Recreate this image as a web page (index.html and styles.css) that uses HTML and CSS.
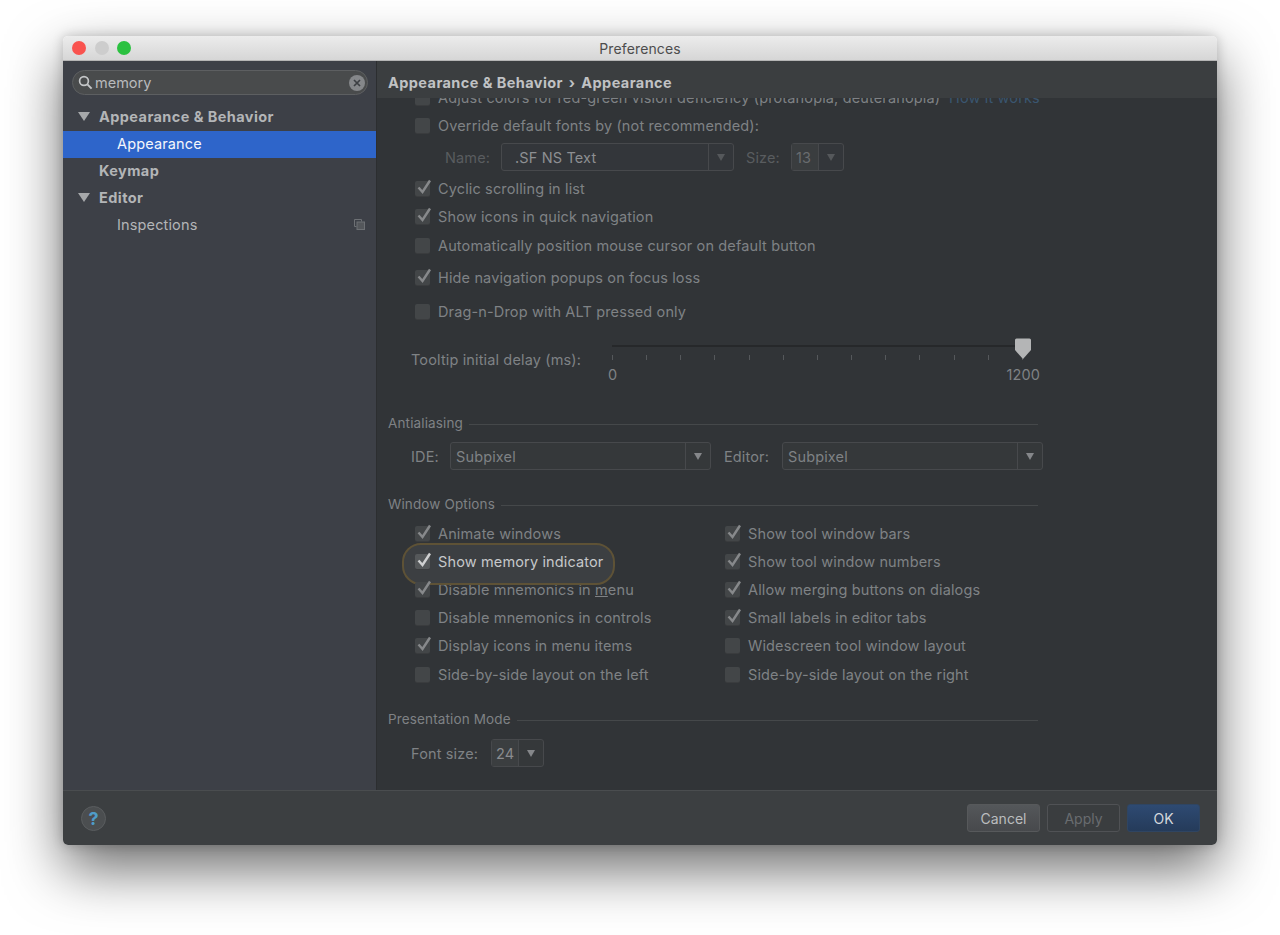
FILE: index.html
```html
<!DOCTYPE html>
<html lang="en">

<head>
    <meta charset="UTF-8">
    <title>Preferences</title>
    <link rel="stylesheet" href="styles.css">
</head>

<body>
    <svg class="defs" width="0" height="0">
        <symbol id="check" viewBox="0 0 18 18">
            <path d="M3.5 9.5 L7.5 14 L15 2.5" fill="none" stroke="currentColor" stroke-width="2.4" />
        </symbol>
    </svg>

    <div class="window">
        <div class="titlebar">
            <div class="lights">
                <span class="light red"></span>
                <span class="light grey"></span>
                <span class="light green"></span>
            </div>
            <div class="title">Preferences</div>
        </div>

        <div class="content">
            <div class="sidebar">
                <div class="search">
                    <svg class="search-icon" width="15" height="15" viewBox="0 0 15 15">
                        <circle cx="6" cy="6" r="4.4" fill="none" stroke="#c4c6c8" stroke-width="1.7" />
                        <path d="M9.4 9.4 L13.6 13.6" stroke="#c4c6c8" stroke-width="2" />
                    </svg>
                    <span class="search-text">memory</span>
                    <svg class="search-clear" width="16" height="16" viewBox="0 0 16 16">
                        <circle cx="8" cy="8" r="8" fill="#85878a" />
                        <path d="M5 5 L11 11 M11 5 L5 11" stroke="#3c3f43" stroke-width="1.7" />
                    </svg>
                </div>
                <div class="tree">
                    <div class="node top"><span class="arrow"></span>Appearance &amp; Behavior</div>
                    <div class="node sub selected">Appearance</div>
                    <div class="node top"><span class="arrow none"></span>Keymap</div>
                    <div class="node top"><span class="arrow"></span>Editor</div>
                    <div class="node sub">Inspections
                        <svg class="copy-icon" width="11" height="11" viewBox="0 0 11 11">
                            <path d="M0.5 0.5 H7.5 V2.5 M0.5 0.5 V7.5 H2.5" fill="none" stroke="#6d7074" />
                            <rect x="3" y="3" width="7.5" height="7.5" fill="#54575b" stroke="#6d7074" />
                        </svg>
                    </div>
                </div>
            </div>

            <div class="main">
                <div class="crumbs">Appearance &amp; Behavior <span class="crumb-sep">›</span> Appearance</div>
                <div class="pane">
                    <div class="row clipped">
                        <span class="box"></span>
                        <span>Adjust colors for red-green vision deficiency (protanopia, deuteranopia)</span>
                        <span class="link">How it works</span>
                    </div>
                    <div class="row">
                        <span class="box"></span>
                        <span>Override default fonts by (not recommended):</span>
                    </div>
                    <div class="font-row">
                        <span class="faint name-label">Name:</span>
                        <div class="combo name-combo faint-combo"><span class="combo-text">.SF NS Text</span><span class="combo-btn"></span></div>
                        <span class="faint size-label">Size:</span>
                        <div class="combo size-combo faint-combo"><span class="combo-text">13</span><span class="combo-btn"></span></div>
                    </div>
                    <div class="row gap3">
                        <span class="box"><svg class="tick"><use href="#check" /></svg></span>
                        <span>Cyclic scrolling in list</span>
                    </div>
                    <div class="row">
                        <span class="box"><svg class="tick"><use href="#check" /></svg></span>
                        <span>Show icons in quick navigation</span>
                    </div>
                    <div class="row gap1">
                        <span class="box"></span>
                        <span>Automatically position mouse cursor on default button</span>
                    </div>
                    <div class="row gap4">
                        <span class="box"><svg class="tick"><use href="#check" /></svg></span>
                        <span>Hide navigation popups on focus loss</span>
                    </div>
                    <div class="row gap6">
                        <span class="box"></span>
                        <span>Drag-n-Drop with ALT pressed only</span>
                    </div>

                    <div class="slider-row">
                        <span class="slider-label">Tooltip initial delay (ms):</span>
                        <div class="slider">
                            <div class="track"></div>
                            <div class="ticks">
                                <i></i><i></i><i></i><i></i><i></i><i></i><i></i><i></i><i></i><i></i><i></i><i></i><i></i>
                            </div>
                            <svg class="thumb" width="18" height="22" viewBox="0 0 18 22">
                                <path d="M1 2 Q1 0.5 2.5 0.5 H15.5 Q17 0.5 17 2 V12 L9 21 L1 12 Z" fill="#b4b5b6" />
                            </svg>
                            <div class="scale"><span>0</span><span>1200</span></div>
                        </div>
                    </div>

                    <div class="group antialias">Antialiasing</div>
                    <div class="aa-row">
                        <span class="ide-label">IDE:</span>
                        <div class="combo aa-combo"><span class="combo-text">Subpixel</span><span class="combo-btn"></span></div>
                        <span class="editor-label">Editor:</span>
                        <div class="combo aa-combo"><span class="combo-text">Subpixel</span><span class="combo-btn"></span></div>
                    </div>

                    <div class="group window-options">Window Options</div>
                    <div class="options">
                        <div class="row">
                            <span class="box"><svg class="tick"><use href="#check" /></svg></span>
                            <span>Animate windows</span>
                        </div>
                        <div class="row">
                            <span class="box"><svg class="tick"><use href="#check" /></svg></span>
                            <span>Show tool window bars</span>
                        </div>
                        <div class="row spot">
                            <span class="box"><svg class="tick"><use href="#check" /></svg></span>
                            <span>Show memory indicator</span>
                        </div>
                        <div class="row">
                            <span class="box"><svg class="tick"><use href="#check" /></svg></span>
                            <span>Show tool window numbers</span>
                        </div>
                        <div class="row">
                            <span class="box"><svg class="tick"><use href="#check" /></svg></span>
                            <span>Disable mnemonics in <u>m</u>enu</span>
                        </div>
                        <div class="row">
                            <span class="box"><svg class="tick"><use href="#check" /></svg></span>
                            <span>Allow merging buttons on dialogs</span>
                        </div>
                        <div class="row">
                            <span class="box"></span>
                            <span>Disable mnemonics in controls</span>
                        </div>
                        <div class="row">
                            <span class="box"><svg class="tick"><use href="#check" /></svg></span>
                            <span>Small labels in editor tabs</span>
                        </div>
                        <div class="row">
                            <span class="box"><svg class="tick"><use href="#check" /></svg></span>
                            <span>Display icons in menu items</span>
                        </div>
                        <div class="row">
                            <span class="box"></span>
                            <span>Widescreen tool window layout</span>
                        </div>
                        <div class="row">
                            <span class="box"></span>
                            <span>Side-by-side layout on the left</span>
                        </div>
                        <div class="row">
                            <span class="box"></span>
                            <span>Side-by-side layout on the right</span>
                        </div>
                    </div>

                    <div class="group presentation">Presentation Mode</div>
                    <div class="present-row">
                        <span class="present-label">Font size:</span>
                        <div class="combo present-combo"><span class="combo-text">24</span><span class="combo-btn"></span></div>
                    </div>
                </div>
            </div>
        </div>

        <div class="footer">
            <div class="help">?</div>
            <div class="buttons">
                <div class="btn cancel">Cancel</div>
                <div class="btn apply">Apply</div>
                <div class="btn ok">OK</div>
            </div>
        </div>
    </div>
</body>

</html>
```

FILE: styles.css
```css
* {
    box-sizing: border-box;
}

body {
    margin: 0;
    height: 935px;
    overflow: hidden;
    padding: 36px 63px 0;
    background-color: #fff;
    font-family: Inter, "Liberation Sans", sans-serif;
    font-size: 14.5px;
    letter-spacing: 0.14px;
    color: #7f8285;
}

.defs {
    position: absolute;
}

.window {
    width: 1154px;
    height: 809px;
    display: flex;
    flex-direction: column;
    border-radius: 5px;
    overflow: hidden;
    box-shadow: 0 24px 56px rgba(0, 0, 0, 0.58), 0 0 12px rgba(0, 0, 0, 0.2);
}

/* title bar */
.titlebar {
    height: 25px;
    flex: none;
    display: flex;
    align-items: center;
    position: relative;
    background: linear-gradient(#ececec, #d6d6d6);
    border-bottom: 1px solid #b5b5b5;
}

.lights {
    display: flex;
    gap: 8.5px;
    padding-left: 9px;
}

.light {
    width: 14px;
    height: 14px;
    border-radius: 50%;
}

.red {
    background-color: #f9534f;
}

.grey {
    background-color: #cdcdcd;
}

.green {
    background-color: #2bc140;
}

.title {
    position: absolute;
    left: 0;
    right: 0;
    padding-top: 1px;
    text-align: center;
    font-size: 14px;
    color: #4d4d4d;
}

.content {
    flex: 1;
    display: flex;
    min-height: 0;
}

/* sidebar */
.sidebar {
    width: 314px;
    flex: none;
    background-color: #3d4047;
    border-right: 1px solid #2c2e30;
}

.search {
    margin: 9px 8px 0 9px;
    height: 25px;
    display: flex;
    align-items: center;
    padding: 0 2px 0 5px;
    border-radius: 13px;
    background-color: #494b4c;
    border: 1px solid #5d5f61;
}

.search-text {
    margin-left: 2px;
    flex: 1;
    color: #b8babc;
    letter-spacing: 0;
}

.tree {
    margin-top: 9px;
}

.node {
    height: 27px;
    padding-bottom: 2px;
    display: flex;
    align-items: center;
    color: #b3b5b7;
}

.top {
    padding-left: 15px;
    font-weight: 700;
    letter-spacing: 0.42px;
}

.sub {
    padding-left: 54px;
    position: relative;
}

.selected {
    background-color: #2e65ca;
    color: #f4f6fa;
}

.arrow {
    width: 0;
    height: 0;
    margin-right: 9px;
    border-left: 6px solid transparent;
    border-right: 6px solid transparent;
    border-top: 9px solid #a6a8aa;
}

.arrow.none {
    border-top-color: transparent;
}

.copy-icon {
    margin-left: auto;
    margin-right: 11px;
}

/* right side */
.main {
    flex: 1;
    min-width: 0;
    display: flex;
    flex-direction: column;
    background-color: #313437;
}

.crumbs {
    height: 37px;
    flex: none;
    padding: 6px 0 0 11px;
    display: flex;
    align-items: center;
    white-space: pre;
    font-weight: 700;
    color: #c0c2c4;
    background-color: #3b3e40;
    letter-spacing: 0.42px;
}

.crumb-sep {
    margin: 0 2px;
}

.pane {
    flex: 1;
    overflow: hidden;
}

.row {
    height: 28px;
    display: flex;
    align-items: center;
    padding-left: 38px;
    white-space: nowrap;
}

.clipped {
    margin-top: -15px;
}

.gap1 {
    margin-top: 1px;
}

.gap3 {
    margin-top: 3px;
}

.gap4 {
    margin-top: 4px;
}

.gap6 {
    margin-top: 6px;
}

.box {
    width: 15px;
    height: 15px;
    flex: none;
    margin-right: 8px;
    position: relative;
    border-radius: 2px;
    background-color: #434648;
    box-shadow: 0 1px 0 #3a3c3e;
    color: #87898b;
}

.tick {
    position: absolute;
    left: 0;
    top: -3px;
    width: 18px;
    height: 18px;
}

.link {
    margin-left: 9px;
    color: #3a5670;
}

/* combo boxes */
.combo {
    display: flex;
    height: 28px;
    border: 1px solid #47494c;
    border-radius: 3px;
    background-color: #35383a;
    flex: none;
}

.combo-text {
    flex: 1;
    display: flex;
    align-items: center;
    padding-left: 5px;
    border-right: 1px solid #47494c;
}

.combo-btn {
    width: 24px;
    flex: none;
    display: flex;
    align-items: center;
    justify-content: center;
}

.combo-btn::after {
    content: "";
    border-left: 4.5px solid transparent;
    border-right: 4.5px solid transparent;
    border-top: 7px solid #85878a;
}

.font-row {
    display: flex;
    align-items: center;
    height: 28px;
    margin-top: 4px;
    padding-left: 68px;
}

.font-row .combo {
    background-color: #33363a;
}

.faint {
    color: #595c5f;
}

.name-label {
    width: 56px;
}

.name-combo {
    width: 233px;
}

.name-combo .combo-text {
    padding-left: 13px;
    color: #8d8f92;
}

.size-label {
    width: 45px;
    margin-left: 12px;
}

.size-combo {
    width: 53px;
}

.size-combo .combo-text {
    padding-left: 4px;
    background-color: #3a3d3f;
    color: #696c6f;
}

.faint-combo .combo-btn::after {
    border-top-color: #55585b;
}

/* slider */
.slider-row {
    display: flex;
    height: 62px;
    margin-top: 6px;
    padding-left: 34px;
    position: relative;
}

.slider-label {
    margin-top: 17px;
    height: 24px;
    line-height: 24px;
}

.slider {
    width: 411px;
    position: absolute;
    left: 235px;
    top: 0;
}

.track {
    height: 2px;
    margin-top: 14px;
    background-color: #26282a;
}

.ticks {
    display: flex;
    justify-content: space-between;
    margin-top: 8px;
}

.ticks i {
    width: 1px;
    height: 5px;
    background-color: #55585b;
}

.thumb {
    position: absolute;
    right: -9px;
    top: 7px;
}

.scale {
    display: flex;
    justify-content: space-between;
    margin: 6px -17px 0 -4px;
    line-height: 18px;
}

/* groups */
.group {
    display: flex;
    align-items: center;
    height: 20px;
    margin-right: 179px;
    margin-left: 11px;
    font-size: 13.5px;
}

.group::after {
    content: "";
    flex: 1;
    height: 1px;
    margin-left: 6px;
    margin-top: 2px;
    background-color: #45484a;
}

.antialias {
    margin-top: 20px;
}

.window-options {
    margin-top: 24px;
}

.presentation {
    margin-top: 21px;
}

.aa-row {
    display: flex;
    align-items: center;
    margin-top: 9px;
    padding-left: 34px;
}

.ide-label {
    width: 39px;
}

.aa-combo {
    width: 261px;
}

.editor-label {
    width: 58px;
    margin-left: 13px;
}

.options {
    display: grid;
    grid-template-columns: 310px 1fr;
    grid-auto-rows: 28.2px;
    margin-top: 5px;
}

.options .row {
    height: 28.2px;
}

/* the searched option stays lit up */
.spot {
    position: relative;
    color: #c6c8ca;
}

.spot > * {
    position: relative;
}

.spot::before {
    content: "";
    position: absolute;
    left: 25px;
    top: -4px;
    width: 209px;
    height: 38px;
    border-radius: 19px;
    background-color: #3c3f42;
    border: 2px solid #5e5236;
}

.spot .box {
    background-color: #55585a;
    color: #cfd0d1;
}

.present-row {
    display: flex;
    align-items: center;
    margin-top: 10px;
    padding-left: 34px;
}

.present-label {
    width: 80px;
}

.present-combo {
    width: 53px;
}

.present-combo .combo-text {
    padding-left: 4px;
    background-color: #3b3e40;
    color: #8a8c8f;
}

/* footer */
.footer {
    height: 55px;
    flex: none;
    display: flex;
    align-items: center;
    justify-content: space-between;
    padding: 0 17px 0 18px;
    background-color: #3c3f41;
    border-top: 1px solid #4a4d4f;
}

.help {
    width: 25px;
    height: 25px;
    border-radius: 50%;
    display: flex;
    align-items: center;
    justify-content: center;
    background-color: #4b4e50;
    border: 1px solid #5a5d5f;
    color: #4f9cc9;
    font-size: 18px;
    font-weight: 700;
}

.buttons {
    display: flex;
    gap: 7px;
}

.btn {
    width: 73px;
    height: 28px;
    display: flex;
    align-items: center;
    justify-content: center;
    border-radius: 3px;
    border: 1px solid #57595b;
    font-size: 14px;
    letter-spacing: 0;
}

.cancel {
    background: linear-gradient(#54575a, #47494c);
    color: #bbbdbf;
}

.apply {
    background-color: #3a3d3f;
    border-color: #505255;
    color: #696c6f;
}

.ok {
    background: linear-gradient(#2e4a72, #253b5a);
    border-color: #2f4562;
    color: #d5d8dc;
}
```
